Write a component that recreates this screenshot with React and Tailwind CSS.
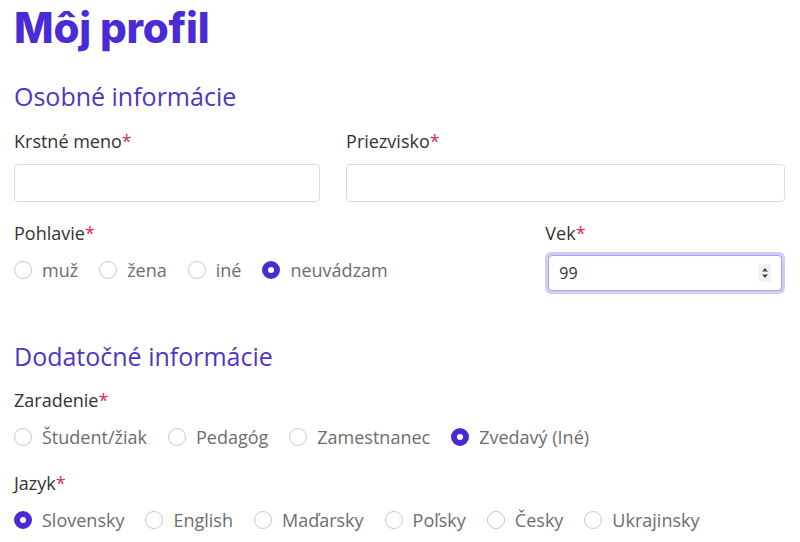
import React from "react";

function Label({ children }) {
  return (
    <div className="text-[18px] leading-[24px] text-[#333]">
      {children}
      <span className="text-[#d0314f]">*</span>
    </div>
  );
}

function Radio({ label, checked }) {
  return (
    <label className="flex items-center gap-[10px]">
      {checked ? (
        <span className="w-[18px] h-[18px] rounded-full border-[6px] border-[#4a2bd1] bg-white" />
      ) : (
        <span className="w-[18px] h-[18px] rounded-full border border-[#c9c9c9] bg-white" />
      )}
      <span className="text-[18px] leading-[24px] text-[#6d6d6d]">{label}</span>
    </label>
  );
}

function RadioRow({ items, checked }) {
  return (
    <div className="flex items-center gap-x-[21px] mt-[13px]">
      {items.map((it) => (
        <Radio key={it} label={it} checked={it === checked} />
      ))}
    </div>
  );
}

export default function App() {
  return (
    <div
      className="bg-white w-[800px] h-[542px] overflow-hidden pl-[14px] pr-[15px]"
      style={{ fontFamily: "'Open Sans', sans-serif" }}
    >
      <h1
        className="text-[42px] leading-[53px] font-extrabold text-[#4b2bd6] tracking-[-0.2px] pt-[1px]"
        style={{ fontFamily: "Inter, sans-serif" }}
      >
        Môj profil
      </h1>

      <h2 className="mt-[25px] text-[25px] leading-[34px] text-[#4f36c2]">Osobné informácie</h2>

      <div className="grid grid-cols-12 gap-x-[26px] mt-[16px]">
        <div className="col-span-5">
          <Label>Krstné meno</Label>
          <div className="mt-[11px] h-[38px] rounded-[4px] border border-[#dcdcdc] bg-white" />
        </div>
        <div className="col-span-7">
          <Label>Priezvisko</Label>
          <div className="mt-[11px] h-[38px] rounded-[4px] border border-[#dcdcdc] bg-white" />
        </div>

        <div className="col-span-8 mt-[19px]">
          <Label>Pohlavie</Label>
          <RadioRow items={["muž", "žena", "iné", "neuvádzam"]} checked="neuvádzam" />
        </div>
        <div className="col-span-4 mt-[19px]">
          <Label>Vek</Label>
          <div className="mt-[7px] h-[42px] rounded-[6px] p-[3px] bg-[#d3cbf6]">
            <div className="h-full rounded-[4px] border border-[#ad9fea] bg-white flex items-center pl-[10px] pr-[10px]">
              <span className="text-[16px] text-[#333] flex-1">99</span>
              <svg width="12" height="18" viewBox="0 0 12 18" className="bg-[#f1f1f1]">
                <path d="M3 7.5 L6 4 L9 7.5 Z" fill="#444" />
                <path d="M3 10.5 L6 14 L9 10.5 Z" fill="#444" />
              </svg>
            </div>
          </div>
        </div>
      </div>

      <h2 className="mt-[45px] text-[25px] leading-[34px] text-[#4f36c2]">Dodatočné informácie</h2>

      <div className="mt-[15px]">
        <Label>Zaradenie</Label>
        <RadioRow items={["Študent/žiak", "Pedagóg", "Zamestnanec", "Zvedavý (Iné)"]} checked="Zvedavý (Iné)" />
      </div>

      <div className="mt-[22px]">
        <Label>Jazyk</Label>
        <RadioRow
          items={["Slovensky", "English", "Maďarsky", "Poľsky", "Česky", "Ukrajinsky"]}
          checked="Slovensky"
        />
      </div>
    </div>
  );
}
